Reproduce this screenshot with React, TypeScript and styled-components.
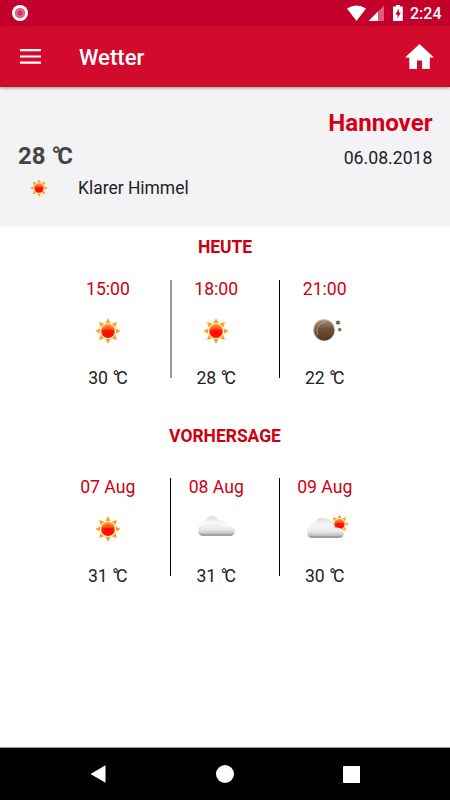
import React from "react";
import styled, { createGlobalStyle } from "styled-components";

const GlobalStyle = createGlobalStyle`
  *, *::before, *::after { box-sizing: border-box; }
  body { margin: 0; background: #fff; }
`;

const Screen = styled.div`
  width: 450px;
  height: 800px;
  display: flex;
  flex-direction: column;
  overflow: hidden;
  background: #fff;
  color: #222;
  font-family: Roboto, "Noto Sans", sans-serif;
  svg { display: block; flex: none; }
`;

const StatusBar = styled.div`
  height: 26px;
  flex: none;
  display: flex;
  align-items: center;
  justify-content: space-between;
  padding: 0 9px 0 12px;
  background: #c3002b;
`;

const StatusIcons = styled.div`
  display: flex;
  align-items: center;
`;

const Clock = styled.span`
  width: 31px;
  margin: 2px 0 0 7px;
  color: #fff;
  font-size: 16px;
  font-weight: 500;
  line-height: 26px;
  white-space: nowrap;
`;

const AppBar = styled.header`
  height: 61px;
  flex: none;
  display: flex;
  align-items: center;
  padding: 0 16px 0 20px;
  background: #d20a2c;
  border-bottom: 1px solid #da0712;
  box-shadow: 0 1px 3px rgba(0, 0, 0, 0.4);
  position: relative;
`;

const Title = styled.h1`
  flex: 1;
  margin: 2px 0 0 38px;
  color: #fff;
  font-size: 22.1px;
  font-weight: 500;
  line-height: 30px;
`;

const Current = styled.section`
  height: 139px;
  flex: none;
  padding: 20px 17.5px 0 18px;
  background: #f3f3f6;
`;

const City = styled.h2`
  margin: 0;
  height: 32px;
  line-height: 32px;
  font-size: 24.1px;
  font-weight: 700;
  color: #d20019;
  text-align: right;
`;

const Line = styled.div`
  height: 33px;
  display: flex;
  align-items: center;
  justify-content: space-between;
`;

const Temperature = styled.span`
  font-size: 24px;
  line-height: 32px;
  font-weight: 700;
  color: #444;
`;

const Degree = styled.span`
  letter-spacing: -0.15em;
`;

const Detail = styled.span`
  font-size: 17.7px;
  padding-top: 4px;
`;

const Condition = styled.div`
  height: 32px;
  display: flex;
  align-items: center;
  padding-left: 12px;
  gap: 30px;
  font-size: 17.45px;
`;

const Forecast = styled.section<{ $height: number }>`
  height: ${(p) => p.$height}px;
  flex: none;
  padding-top: 9px;
`;

const Heading = styled.h3`
  margin: 0;
  height: 24px;
  line-height: 24px;
  text-align: center;
  font-size: 17.45px;
  font-weight: 700;
  color: #cc0010;
`;

const Slots = styled.div<{ $top: number }>`
  display: flex;
  margin: ${(p) => p.$top}px 0 0 62.5px;
`;

const Slot = styled.div<{ $divider: string; $soft?: boolean }>`
  width: 108.5px;
  height: 98px;
  padding-right: ${(p) => (p.$soft ? 16.5 : 17)}px;
  margin-right: ${(p) => (p.$soft ? -1 : 0)}px;
  width: ${(p) => (p.$soft ? 109.5 : 108.5)}px;
  border-right: ${(p) => (p.$soft ? 2 : 1)}px solid ${(p) => p.$divider};
  display: flex;
  flex-direction: column;
  align-items: center;
`;

const SlotLabel = styled.span<{ $red?: boolean }>`
  height: 18px;
  flex: none;
  line-height: 18px;
  font-size: 17.6px;
  white-space: nowrap;
  color: ${(p) => (p.$red ? "#cc0014" : "#222")};
`;

const IconCell = styled.div<{ $x: number; $y: number }>`
  height: 28px;
  flex: none;
  display: flex;
  align-items: center;
  justify-content: center;
  margin: ${(p) => 19 + p.$y}px 0 ${(p) => 24 - p.$y}px ${(p) => p.$x}px;
`;

const Spacer = styled.div`
  flex: 1;
`;

const NavBar = styled.nav`
  height: 53px;
  flex: none;
  display: flex;
  align-items: center;
  justify-content: space-between;
  padding: 0 90px;
  background: #000;
  border-top: 1px solid #999;
`;

const rays = [0, 45, 90, 135, 180, 225, 270, 315];

const Gradients = () => (
  <svg width="0" height="0" aria-hidden="true">
    <defs>
      <radialGradient id="sun" cx="50%" cy="68%" r="65%">
        <stop offset="0" stopColor="#ff0500" />
        <stop offset=".62" stopColor="#ff1600" />
        <stop offset="1" stopColor="#ff9e2c" />
      </radialGradient>
      <linearGradient id="cloud" x1="0" y1="0" x2="0" y2="1">
        <stop offset="0" stopColor="#dadada" />
        <stop offset=".35" stopColor="#f8f8f8" />
        <stop offset=".7" stopColor="#e8e8e8" />
        <stop offset=".88" stopColor="#c4c4c4" />
        <stop offset="1" stopColor="#777" />
      </linearGradient>
      <linearGradient id="moon" x1="0" y1="0" x2="0" y2="1">
        <stop offset="0" stopColor="#a28a74" />
        <stop offset=".4" stopColor="#71543d" />
        <stop offset="1" stopColor="#55371f" />
      </linearGradient>
    </defs>
  </svg>
);

const SunShape = () => (
  <g>
    {rays.map((a) => (
      <path key={a} d="M-2.8-7.6L0-12.7 2.8-7.6Q0-8.600-2.8-7.6Z" fill="#ffa01c" transform={`rotate(${a})`} />
    ))}
    <circle r="7.4" fill="#ffe2b8" />
    <circle r="6.9" fill="url(#sun)" />
    <path d="M-5.7-1.8A5.9 5.9 0 0 1 5.7-1.8Q0-.6-5.7-1.8Z" fill="#ffb13b" opacity=".4" />
  </g>
);

const Sun = ({ size = 26 }: { size?: number }) => (
  <svg width={size} height={size} viewBox="-13 -13 26 26">
    <SunShape />
  </svg>
);

const Cloud = () => (
  <svg width="38" height="22" viewBox="0 0 38 22">
    <path
      d="M5 20.8C1.5 20.8 0 18.5 .3 15.8 .3 13 .5 11.800 1.8 10.500 1.500 7.500 4 5 8 5.600 9.500 1 14.500-.8 18 2.400 20 4 20.800 5 21.500 5.600 25 4.500 28.500 7 29 11.400 33 10.500 37 12.500 37 16 37 19 35 20.800 32 20.800Z"
      fill="url(#cloud)"
    />
    <path d="M3 10.500C5 7 9.500 6.500 12.500 9M21 6.500C23 9 25 11 28 11.500" fill="none" stroke="#fff" strokeWidth="1.3" opacity=".7" />
  </svg>
);

const CloudSun = () => (
  <svg width="42" height="26" viewBox="0 0 42 26">
    <g transform="translate(32.5 10) scale(.75)">
      <SunShape />
    </g>
    <path
      d="M5 23.800C1.500 23.800 0 21.500 .3 18.800 .3 16 .5 14.800 1.800 13.500 1.500 10.500 4 8 8 8.600 9.500 4 14 2.500 17.500 4.800 20 4 22 4.500 23.500 6.500 26 7.500 26 10.500 27.500 13.800 33 12.500 37 16 37 19.500 37 22 35 23.800 32 23.800Z"
      fill="url(#cloud)"
    />
  </svg>
);

const Moon = () => (
  <svg width="29" height="22" viewBox="0 0 29 22">
    <circle cx="11" cy="11" r="10.8" fill="#b8a491" />
    <circle cx="11.3" cy="11.4" r="10" fill="url(#moon)" />
    <path d="M4.500 15.500C2.500 9 6 3.500 13 2.800" fill="none" stroke="#c5b29d" strokeWidth=".8" />
    <path d="M25 1l.7 1.300 1.700-.2-.8 1.600.8 1.500-1.700-.2-.7 1.400-.8-1.400-1.700.2.900-1.500-.9-1.600 1.700.2ZM26.700 8.500l.6 1 1.400-.1-.7 1.300.7 1.200-1.400-.1-.6 1-.7-1-1.300.1.700-1.200-.7-1.300 1.300.1Z" fill="#7c5d48" />
  </svg>
);

const Celsius = ({ value }: { value: number }) => (
  <>
    {value} <Degree>°</Degree>C
  </>
);

type SlotData = {
  label: string;
  icon: React.ReactNode;
  temp: number;
  divider: string;
  soft?: boolean;
  x?: number;
  y?: number;
};

const today: SlotData[] = [
  { label: "15:00", icon: <Sun />, temp: 30, divider: "#999", soft: true },
  { label: "18:00", icon: <Sun />, temp: 28, divider: "#000" },
  { label: "21:00", icon: <Moon />, temp: 22, divider: "transparent", x: 5, y: -1 },
];

const days: SlotData[] = [
  { label: "07 Aug", icon: <Sun />, temp: 31, divider: "#000" },
  { label: "08 Aug", icon: <Cloud />, temp: 31, divider: "#000", x: 1, y: -3 },
  { label: "09 Aug", icon: <CloudSun />, temp: 30, divider: "transparent", x: 6, y: -2 },
];

const SlotRow = ({ slots, top }: { slots: SlotData[]; top: number }) => (
  <Slots $top={top}>
    {slots.map((s) => (
      <Slot key={s.label} $divider={s.divider} $soft={s.soft}>
        <SlotLabel $red>{s.label}</SlotLabel>
        <IconCell $x={s.x ?? 0} $y={s.y ?? 0}>
          {s.icon}
        </IconCell>
        <SlotLabel>
          <Celsius value={s.temp} />
        </SlotLabel>
      </Slot>
    ))}
  </Slots>
);

export default function App() {
  return (
    <Screen>
      <GlobalStyle />
      <StatusBar>
        <svg width="16" height="16" viewBox="0 0 16 16">
          <circle cx="8" cy="8" r="8" fill="#fff" />
          <circle cx="8" cy="8" r="5.3" fill="#e0668a" />
          <circle cx="8" cy="8" r="2.5" fill="#cc3261" />
        </svg>
        <StatusIcons>
          <svg width="57" height="18" viewBox="0 0 57 18">
            <path d="M1 4.500Q10.500-1.500 20 4.500L10.500 17Z" fill="#fff" />
            <path d="M38 1.500V17H22.500Z" fill="#dc5c7d" />
            <path d="M32 7.500V17H22.500Z" fill="#fff" />
            <path d="M50 1h4v1.500h2.800V17h-9.800V2.500H50Z" fill="#fff" />
            <path d="M52.800 4.500v4h2L51.500 14.500V10.500H49.300Z" fill="#c3002b" />
          </svg>
          <Clock>2:24</Clock>
        </StatusIcons>
      </StatusBar>
      <AppBar>
        <svg width="21" height="15" viewBox="0 0 21 15">
          <path d="M0 1.200H21M0 7.500H21M0 13.700H21" stroke="#fff" strokeWidth="2.200" />
        </svg>
        <Title>Wetter</Title>
        <svg width="29" height="25" viewBox="0 0 29 25">
          <path d="M14.500 0L29 13.500H24.800V25H17V16.500H12V25H4.300V13.500H0Z" fill="#fff" />
        </svg>
      </AppBar>
      <Current>
        <City>Hannover</City>
        <Line>
          <Temperature>
            <Celsius value={28} />
          </Temperature>
          <Detail>06.08.2018</Detail>
        </Line>
        <Condition>
          <Sun size={18} />
          <span>Klarer Himmel</span>
        </Condition>
      </Current>
      <Gradients />
      <Forecast $height={189}>
        <Heading>HEUTE</Heading>
        <SlotRow slots={today} top={21} />
      </Forecast>
      <Forecast $height={170}>
        <Heading>VORHERSAGE</Heading>
        <SlotRow slots={days} top={30} />
      </Forecast>
      <Spacer />
      <NavBar>
        <svg width="16" height="18" viewBox="0 0 16 18">
          <path d="M.5 9L15.500 .3V17.700Z" fill="#fff" />
        </svg>
        <svg width="18" height="18" viewBox="0 0 18 18">
          <circle cx="9" cy="9" r="9" fill="#fff" />
        </svg>
        <svg width="17" height="17" viewBox="0 0 17 17">
          <rect width="17" height="17" rx=".7" fill="#fff" />
        </svg>
      </NavBar>
    </Screen>
  );
}
